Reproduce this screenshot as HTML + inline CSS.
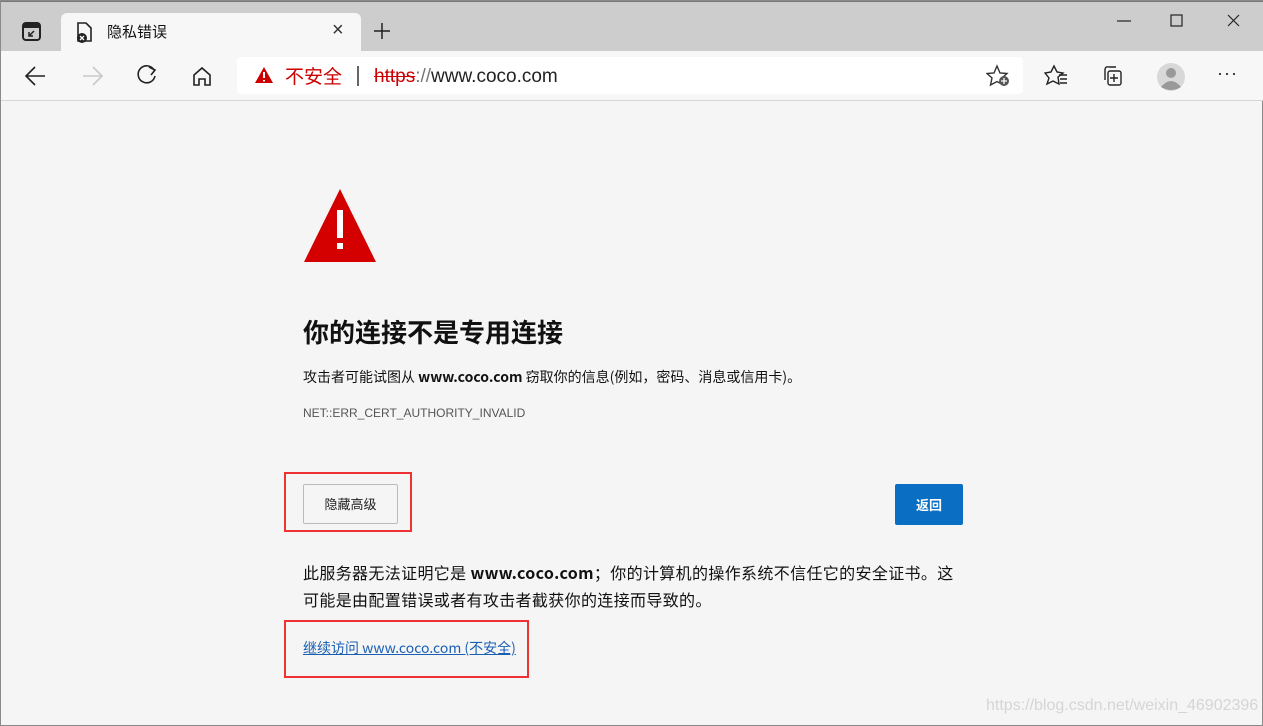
<!DOCTYPE html>
<html><head><meta charset="utf-8"><style>
*{margin:0;padding:0;box-sizing:border-box}
body{width:1263px;height:726px;overflow:hidden;background:#f5f5f5;font-family:"Liberation Sans","Noto Sans CJK SC",sans-serif;position:relative;border:1px solid #8a8a8a}
.abs{position:absolute}
.cn{font-family:"Noto Sans CJK SC","Liberation Sans",sans-serif}
</style></head><body>
<div class="abs" style="left:0;top:0;width:1263px;height:50px;background:#cdcdcd;border-top:1px solid #777"></div>
<div class="abs" style="left:60px;top:12px;width:300px;height:39px;background:#f7f7f7;border-radius:6px 6px 0 0"></div>
<svg class="abs" style="left:20px;top:21px" width="22" height="20"><rect x="2" y="1" width="17" height="17" rx="3" fill="none" stroke="#222" stroke-width="2"/><rect x="2" y="1" width="17" height="5" fill="#222"/><path d="M13 9 L8 14 M8 10 V14 H12" stroke="#222" stroke-width="1.5" fill="none"/></svg>
<svg class="abs" style="left:72px;top:20px" width="22" height="24"><path d="M5 2 H13 L18 7 V20 H5 Z" fill="none" stroke="#222" stroke-width="1.6"/><circle cx="9" cy="17" r="5" fill="#222"/><path d="M7 15 L11 19 M11 15 L7 19" stroke="#fff" stroke-width="1.3"/></svg>
<div class="abs cn" style="left:106px;top:20px;font-size:15px;color:#111">隐私错误</div>
<div class="abs" style="left:331px;top:18px;font-size:20px;color:#333">×</div>
<svg class="abs" style="left:371px;top:20px" width="20" height="20"><path d="M10 2 V18 M2 10 H18" stroke="#222" stroke-width="1.5"/></svg>
<svg class="abs" style="left:1110px;top:12px" width="150" height="16"><path d="M6 8 H20" stroke="#222" stroke-width="1.2"/><rect x="60" y="2" width="11" height="11" fill="none" stroke="#222" stroke-width="1.2"/><path d="M117 2 L128 13 M128 2 L117 13" stroke="#222" stroke-width="1.2"/></svg>
<div class="abs" style="left:0;top:50px;width:1263px;height:50px;background:#f7f7f7;border-bottom:1px solid #d6d6d6"></div>
<svg class="abs" style="left:22px;top:63px" width="210" height="24"><path d="M4 12 H22 M12 3 L3 12 L12 21" stroke="#222" stroke-width="1.6" fill="none"/><path d="M60 12 H78 M70 3 L79 12 L70 21" stroke="#c8c8c8" stroke-width="1.6" fill="none"/><path d="M131 6 A8.5 8.5 0 1 0 132 12" stroke="#222" stroke-width="1.6" fill="none"/><path d="M126 3 L132 6 L128 11" stroke="#222" stroke-width="1.6" fill="none"/><path d="M171 21 V11 L179 4 L187 11 V21 H182 V15 H176 V21 Z" stroke="#222" stroke-width="1.6" fill="none"/></svg>
<div class="abs" style="left:236px;top:56px;width:786px;height:37px;background:#fff;border-radius:4px"></div>
<svg class="abs" style="left:253px;top:65px" width="20" height="18"><path d="M10 1 L19 17 H1 Z" fill="#c00"/><path d="M10 6 V12 M10 14 V15.5" stroke="#fff" stroke-width="2"/></svg>
<div class="abs cn" style="left:284px;top:63px;font-size:19px;color:#c00;line-height:24px">不安全</div>
<div class="abs" style="left:356px;top:65px;width:2px;height:20px;background:#666"></div>
<div class="abs" style="left:373px;top:64px;font-size:19px;line-height:24px;color:#222"><span style="color:#c00;text-decoration:line-through">https</span><span style="color:#777">://</span>www.coco.com</div>
<svg class="abs" style="left:985px;top:63px" width="26" height="24"><path d="M11 2 L14 9 L21 9.5 L16 14 L17.5 21 L11 17.5 L4.5 21 L6 14 L1 9.5 L8 9 Z" fill="none" stroke="#333" stroke-width="1.4"/><circle cx="18" cy="17" r="5" fill="#555"/><path d="M18 14 V20 M15 17 H21" stroke="#fff" stroke-width="1.3"/></svg>
<svg class="abs" style="left:1043px;top:63px" width="90" height="24"><path d="M10 2 L13 8 L19 9 L14 13 L15 20 L9 17 L3 20 L5 14 L1 9 L7 8 Z" fill="none" stroke="#222" stroke-width="1.4"/><path d="M15 11 H23 M16 15 H23 M16 19 H23" stroke="#222" stroke-width="1.4"/><rect x="64" y="7" width="13" height="14" rx="2" fill="none" stroke="#222" stroke-width="1.4"/><path d="M61 16 V6 Q61 2 65 3 L72 3" fill="none" stroke="#222" stroke-width="1.4"/><path d="M70 10 V18 M66 14 H74" stroke="#222" stroke-width="1.4"/></svg>
<svg class="abs" style="left:1155px;top:61px" width="30" height="30"><circle cx="15" cy="15" r="14" fill="#d8d8d8"/><circle cx="15" cy="11" r="5" fill="#999"/><path d="M5 25 Q15 13 25 25 Q15 31 5 25Z" fill="#999"/></svg>
<div class="abs" style="left:1216px;top:62px;font-size:18px;color:#222;letter-spacing:1px">···</div>

<svg class="abs" style="left:302px;top:187px" width="74" height="75"><path d="M37 1 L73 74 H1 Z" fill="#d40000"/><path d="M37 22 V50" stroke="#fff" stroke-width="6"/><rect x="34" y="55" width="6" height="6" fill="#fff"/></svg>
<div class="abs cn" style="left:302px;top:312px;font-size:26px;font-weight:bold;color:#111">你的连接不是专用连接</div>
<div class="abs cn" style="left:302px;top:366px;font-size:14px;color:#111">攻击者可能试图从 <b>www.coco.com</b> 窃取你的信息(例如，密码、消息或信用卡)。</div>
<div class="abs" style="left:302px;top:405px;font-size:12px;color:#555">NET::ERR_CERT_AUTHORITY_INVALID</div>
<div class="abs" style="left:283px;top:471px;width:128px;height:60px;border:2px solid #e33"></div>
<div class="abs cn" style="left:302px;top:483px;width:95px;height:40px;border:1px solid #bbb;border-radius:2px;background:#f5f5f5;font-size:13px;color:#222;text-align:center;line-height:38px">隐藏高级</div>
<div class="abs cn" style="left:894px;top:483px;width:68px;height:41px;background:#0a6fc2;border-radius:2px;font-size:13px;font-weight:bold;color:#fff;text-align:center;line-height:41px">返回</div>
<div class="abs cn" style="left:302px;top:558px;width:680px;font-size:16px;line-height:27px;color:#111;letter-spacing:0.35px;white-space:nowrap">此服务器无法证明它是 <b>www.coco.com</b>；你的计算机的操作系统不信任它的安全证书。这<br>可能是由配置错误或者有攻击者截获你的连接而导致的。</div>
<div class="abs" style="left:283px;top:619px;width:245px;height:58px;border:2px solid #e33"></div>
<div class="abs cn" style="left:302px;top:637px;font-size:14px;color:#1a5fb4;text-decoration:underline">继续访问 www.coco.com (不安全)</div>
<div class="abs" style="left:985px;top:696px;font-size:16px;color:#d5d5d5">https://blog.csdn.net/weixin_46902396</div>
</body></html>
